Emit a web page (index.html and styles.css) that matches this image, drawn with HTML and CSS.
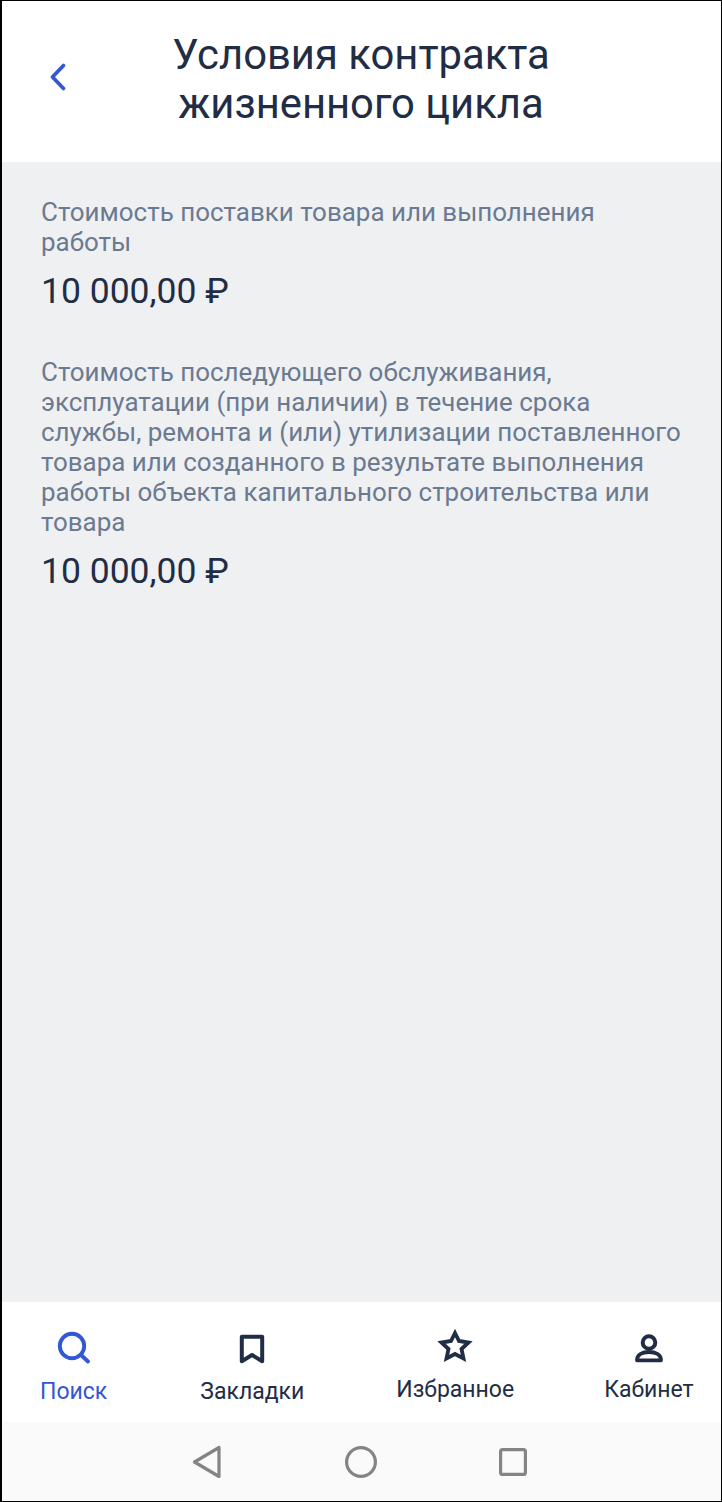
FILE: index.html
```html
<!DOCTYPE html>
<html lang="ru">
<head>
<meta charset="utf-8">
<title>Условия контракта жизненного цикла</title>
<link rel="stylesheet" href="styles.css">
</head>
<body>
<div class="screen">
  <header class="header">
    <svg class="back" width="20" height="30" viewBox="0 0 20 30"><path d="M15.500 3.500 4.500 15 15.500 26.500" fill="none" stroke="#3358d4" stroke-width="3.800" stroke-linecap="round" stroke-linejoin="round"/></svg>
    <h1 class="title">Условия контракта<br>жизненного цикла</h1>
  </header>
  <main class="content">
    <section class="field">
      <p class="label">Стоимость поставки товара или выполнения работы</p>
      <p class="value">10 000,00 ₽</p>
    </section>
    <section class="field">
      <p class="label">Стоимость последующего обслуживания, эксплуатации (при наличии) в течение срока службы, ремонта и (или) утилизации поставленного товара или созданного в результате выполнения работы объекта капитального строительства или товара</p>
      <p class="value">10 000,00 ₽</p>
    </section>
  </main>
  <nav class="tabs">
    <div class="tab tab-search">
      <svg width="36" height="36" viewBox="0 0 36 36"><circle cx="16" cy="16" r="12.200" fill="none" stroke="#3358d4" stroke-width="3.900"/><path d="M25 25 32 31.500" stroke="#3358d4" stroke-width="3.900" stroke-linecap="round"/></svg>
      <span class="tab-label active">Поиск</span>
    </div>
    <div class="tab tab-marks">
      <svg width="36" height="36" viewBox="0 0 36 36"><path d="M7.800 6.800H28.200V31.200L18 25 7.800 31.200Z" fill="none" stroke="#212d45" stroke-width="4" stroke-linejoin="round"/></svg>
      <span class="tab-label">Закладки</span>
    </div>
    <div class="tab tab-fav raised">
      <svg width="36" height="36" viewBox="0 0 36 36"><path d="M18 5 22 13 31.500 14.500 24.500 21 26.500 30.500 18 26 9.500 30.500 11.500 21 4.500 14.500 14 13Z" fill="none" stroke="#212d45" stroke-width="3.800" stroke-linejoin="miter"/></svg>
      <span class="tab-label">Избранное</span>
    </div>
    <div class="tab tab-cab raised">
      <svg width="36" height="36" viewBox="0 0 36 36"><circle cx="18" cy="14.500" r="6.300" fill="none" stroke="#212d45" stroke-width="4"/><path d="M6 32.300C6 27 11 24 18 24S30 27 30 32.300Z" fill="none" stroke="#212d45" stroke-width="3.800" stroke-linejoin="round"/></svg>
      <span class="tab-label">Кабинет</span>
    </div>
  </nav>
  <footer class="sysbar">
    <svg width="30" height="34" viewBox="0 0 30 34"><path d="M27 2.500V31.500L2.500 17Z" fill="none" stroke="#848484" stroke-width="3.200" stroke-linejoin="round"/></svg>
    <svg width="32" height="32" viewBox="0 0 32 32"><circle cx="16" cy="16" r="14.400" fill="none" stroke="#848484" stroke-width="3.200"/></svg>
    <svg width="28" height="28" viewBox="0 0 28 28"><rect x="1.600" y="1.600" width="24.800" height="24.800" rx="2" fill="none" stroke="#848484" stroke-width="3.200"/></svg>
  </footer>
</div>
</body>
</html>
```
FILE: styles.css
```css
* { box-sizing: border-box; }
html, body { margin: 0; padding: 0; }
body { font-family: Roboto, "Noto Sans", sans-serif; background: #fff; }
.screen {
  width: 722px;
  height: 1502px;
  border: solid #000;
  border-width: 1px 1px 1px 2px;
  display: flex;
  flex-direction: column;
  overflow: hidden;
}
.header {
  height: 161px;
  flex: none;
  background: #fff;
  display: flex;
  align-items: center;
  padding-left: 46px;
}
.back { flex: none; margin-top: -9px; }
.title {
  margin: -6px 0 0 0;
  flex: 1;
  padding-right: 67px;
  font-weight: 400;
  font-size: 41.800px;
  line-height: 49px;
  color: #212d45;
  text-align: center;
}
.content {
  flex: 1;
  background: #eef0f2;
  padding: 35px 35px 0 39px;
}
.field { margin-bottom: 44px; }
.label {
  margin: 0;
  font-size: 25.950px;
  line-height: 30px;
  color: #6b7a90;
}
.value {
  margin: 12px 0 0;
  font-size: 35.500px;
  line-height: 44px;
  color: #212d45;
}
.tabs {
  height: 120px;
  flex: none;
  background: #fff;
  display: flex;
  padding-left: 38px;
}
.tab {
  display: flex;
  flex-direction: column;
  align-items: center;
  padding-top: 28px;
}
.tab.raised { padding-top: 26px; }
.tab-marks { margin-left: 93px; }
.tab-fav { margin-left: 92px; }
.tab-cab { margin-left: 90px; }
.tab-label {
  font-size: 23px;
  line-height: 28px;
  margin-top: 12px;
  color: #212d45;
}
.tab-label.active { color: #3358d4; }
.sysbar {
  height: 79px;
  flex: none;
  background: #fafafa;
  display: flex;
  align-items: center;
  padding-left: 190px;
  gap: 122.500px;
}
```
